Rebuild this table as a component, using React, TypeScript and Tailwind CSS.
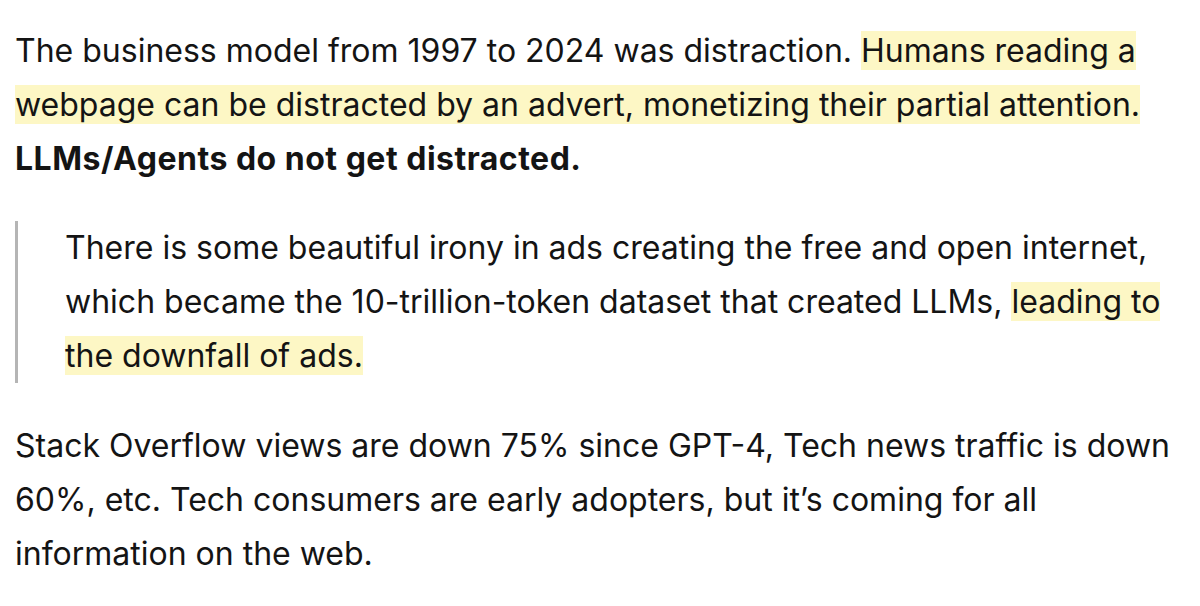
import React from 'react';

const Mark: React.FC<{ children: React.ReactNode }> = ({ children }) => (
  <mark className="bg-[#fdf7c5] text-inherit [box-decoration-break:clone]">{children}</mark>
);

const App: React.FC = () => {
  return (
    <div className="w-[1200px] h-[606px] bg-white overflow-hidden px-[15px] pt-[24px] text-[#141414] text-[32px] leading-[54px] font-['Inter','Noto_Sans',sans-serif]">
      {/* Opening paragraph */}
      <p>
        The business model from 1997 to 2024 was distraction.{' '}
        <Mark>
          Humans reading a<br />
          webpage can be distracted by an advert, monetizing their partial attention.
        </Mark>
        <br />
        <strong className="font-bold tracking-[0.5px]">LLMs/Agents do not get distracted.</strong>
      </p>

      {/* Quote */}
      <blockquote className="mt-[35px] border-l-[3px] border-[#b5b5b5] pl-[47px]">
        There is some beautiful irony in ads creating the free and open internet,
        <br />
        which became the 10-trillion-token dataset that created LLMs,{' '}
        <Mark>
          leading to
          <br />
          the downfall of ads.
        </Mark>
      </blockquote>

      {/* Closing paragraph */}
      <p className="mt-[36px]">
        Stack Overflow views are down 75% since GPT-4, Tech news traffic is down
        <br />
        60%, etc. Tech consumers are early adopters, but it’s coming for all
        <br />
        information on the web.
      </p>
    </div>
  );
};

export default App;
